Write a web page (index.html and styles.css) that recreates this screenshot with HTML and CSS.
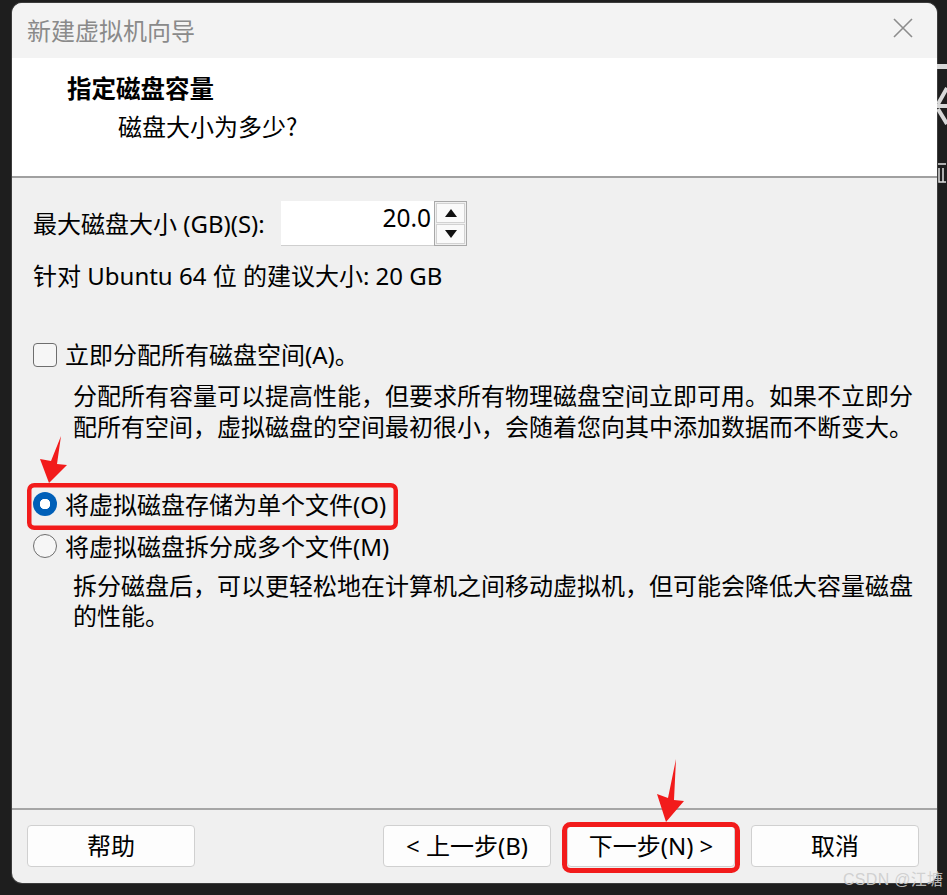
FILE: index.html
```html
<!DOCTYPE html>
<html lang="zh-CN">
<head>
<meta charset="utf-8">
<title>新建虚拟机向导</title>
<link rel="stylesheet" href="styles.css">
</head>
<body>
<div class="window">
  <div class="titlebar">
    <span class="title">新建虚拟机向导</span>
    <svg class="close" width="20" height="20" viewBox="0 0 20 20"><path d="M1 1 L19 19 M19 1 L1 19" stroke="#8c8c8c" stroke-width="1.6" fill="none"/></svg>
  </div>
  <div class="header">
    <div class="h-title">指定磁盘容量</div>
    <div class="h-sub">磁盘大小为多少?</div>
  </div>
  <div class="content">
    <div class="size-row">
      <span class="size-label">最大磁盘大小 (GB)(S):</span>
      <div class="spin">
        <div class="spin-input">20.0</div>
        <div class="spin-btns">
          <div class="spin-btn"><svg width="12" height="8" viewBox="0 0 12 8"><path d="M6 0 L12 8 L0 8 Z" fill="#111"/></svg></div>
          <div class="spin-btn"><svg width="12" height="8" viewBox="0 0 12 8"><path d="M0 0 L12 0 L6 8 Z" fill="#111"/></svg></div>
        </div>
      </div>
    </div>
    <div class="text-line rec">针对 Ubuntu 64 位 的建议大小: 20 GB</div>
    <div class="opt-row check-row">
      <span class="checkbox"></span>
      <span class="opt-label">立即分配所有磁盘空间(A)。</span>
    </div>
    <p class="desc">分配所有容量可以提高性能，但要求所有物理磁盘空间立即可用。如果不立即分<br>配所有空间，虚拟磁盘的空间最初很小，会随着您向其中添加数据而不断变大。</p>
    <div class="radios">
      <div class="opt-row radio-row">
        <span class="radio checked"></span>
        <span class="opt-label">将虚拟磁盘存储为单个文件(O)</span>
      </div>
      <div class="opt-row radio-row">
        <span class="radio"></span>
        <span class="opt-label">将虚拟磁盘拆分成多个文件(M)</span>
      </div>
    </div>
    <p class="desc desc2">拆分磁盘后，可以更轻松地在计算机之间移动虚拟机，但可能会降低大容量磁盘<br>的性能。</p>
  </div>
  <div class="footer">
    <button class="btn">帮助</button>
    <div class="btn-group">
      <button class="btn">&lt; 上一步(B)</button>
      <button class="btn">下一步(N) &gt;</button>
      <button class="btn">取消</button>
    </div>
  </div>
</div>

<svg class="bg-peek" width="10" height="200" viewBox="0 0 10 200">
  <rect x="0" y="64" width="10" height="5" fill="#d8d8d8"/>
  <path d="M10 88 L1 104 M1 109 L10 124" stroke="#d8d8d8" stroke-width="4" fill="none"/>
  <rect x="0" y="104" width="10" height="4" fill="#d8d8d8"/>
  <path d="M1 164 L9 164 M2 168 L2 182 L9 182 M6 168 L6 182" stroke="#e0e0e0" stroke-width="1.5" fill="none"/>
</svg>

<svg class="annot" width="947" height="895" viewBox="0 0 947 895">
  <rect x="29.25" y="485.25" width="366.5" height="42.5" rx="5" fill="none" stroke="#f21b1b" stroke-width="4.5"/>
  <rect x="564.5" y="824.5" width="173" height="46" rx="6" fill="none" stroke="#f21b1b" stroke-width="5"/>
  <polygon points="61,436 57,464 67,465 49,483 40,459 51,461" fill="#f21b1b"/>
  <polygon points="676,759 674,800 684,801 666,822 657,794 668,798" fill="#f21b1b"/>
</svg>

<div class="watermark">CSDN @江塘</div>
</body>
</html>
```

FILE: styles.css
```css
* { box-sizing: border-box; }

html, body {
  margin: 0;
}

body {
  width: 947px;
  height: 895px;
  overflow: hidden;
  background: #1e1e1e;
  padding: 3px 0 0 12px;
  position: relative;
  font-family: "Noto Sans", "Noto Sans CJK SC", sans-serif;
  color: #000;
}

.window {
  width: 925px;
  height: 880px;
  border-radius: 10px;
  overflow: hidden;
  background: #f0f0f0;
  display: flex;
  flex-direction: column;
  box-shadow: 0 0 0 1px #3c3c3c;
}

.titlebar {
  height: 55px;
  flex: none;
  background: #f3f3f3;
  display: flex;
  align-items: center;
  justify-content: space-between;
  padding: 0 24px 0 15px;
}

.title {
  font-family: "Noto Sans CJK SC", sans-serif;
  font-size: 24px;
  color: #8a8a8a;
  line-height: 30px;
  margin-top: -2px;
}

.close { display: block; margin-top: -6px; }

.header {
  height: 120px;
  flex: none;
  background: #fff;
  border-bottom: 2px solid #a0a0a0;
  padding: 14px 0 0 55px;
  font-family: "Noto Sans CJK SC", sans-serif;
}

.h-title {
  font-size: 24.5px;
  font-weight: 700;
  line-height: 32px;
}

.h-sub {
  font-size: 24px;
  line-height: 32px;
  margin-top: 6px;
  padding-left: 51px;
}

.content {
  flex: 1;
  padding: 0 0 0 21px;
  font-size: 24px;
  white-space: nowrap;
}

.size-row {
  margin-top: 23px;
  height: 45px;
  display: flex;
  align-items: center;
}

.size-label {
  width: 248px;
  flex: none;
  line-height: 31px;
}

.spin {
  width: 186px;
  height: 45px;
  display: flex;
}

.spin-input {
  flex: 1;
  background: #fff;
  border-bottom: 1px solid #cfcfcf;
  text-align: right;
  padding-right: 3px;
  line-height: 34px;
  font-size: 24.5px;
}

.spin-btns {
  width: 33px;
  border: 1px solid #a8a8a8;
  display: flex;
  flex-direction: column;
  gap: 1px;
  padding: 1px;
  background: #f0f0f0;
}

.spin-btn {
  flex: 1;
  background: #fafafa;
  border: 1px solid #d2d2d2;
  display: flex;
  align-items: center;
  justify-content: center;
}

.spin-btn svg { display: block; }

.text-line {
  line-height: 31px;
}

.rec { margin-top: 14px; }

.opt-row {
  display: flex;
  align-items: center;
}

.check-row {
  margin-top: 48px;
  height: 31px;
}

.checkbox {
  width: 24px;
  height: 24px;
  flex: none;
  border: 1.5px solid #6e6e6e;
  border-radius: 4px;
  background: #f6f6f6;
  margin-right: 8px;
}

.opt-label {
  line-height: 31px;
}

.desc {
  margin: 10px 0 0 40px;
  line-height: 31px;
}

.radios {
  margin-top: 41px;
}

.radio-row {
  height: 42px;
}

.radio {
  width: 24px;
  height: 24px;
  flex: none;
  border-radius: 50%;
  border: 1.5px solid #6e6e6e;
  background: #f6f6f6;
  margin-right: 8px;
}

.radio.checked {
  border: none;
  background: radial-gradient(circle, #fff 0 5px, #005fb8 5.5px);
}

.desc2 {
  margin-top: 4px;
  line-height: 30px;
}

.footer {
  height: 75px;
  flex: none;
  border-top: 2px solid #a6a6a6;
  display: flex;
  align-items: flex-start;
  justify-content: space-between;
  padding: 15px 18px 0 15px;
}

.btn-group {
  display: flex;
  gap: 16px;
}

.btn {
  width: 168px;
  height: 42px;
  background: #fdfdfd;
  border: 1px solid #d0d0d0;
  border-radius: 4px;
  font-family: "Noto Sans", "Noto Sans CJK SC", sans-serif;
  font-size: 24px;
  color: #000;
  padding: 0;
  line-height: 38px;
}

.bg-peek {
  position: absolute;
  left: 937px;
  top: 0;
}

.annot {
  position: absolute;
  left: 0;
  top: 0;
  pointer-events: none;
}

.watermark {
  position: absolute;
  left: 843px;
  top: 866px;
  font-family: "Liberation Sans", "Noto Sans CJK SC", sans-serif;
  font-size: 16px;
  color: rgba(205, 205, 205, 0.9);
  letter-spacing: 0.3px;
}
```
